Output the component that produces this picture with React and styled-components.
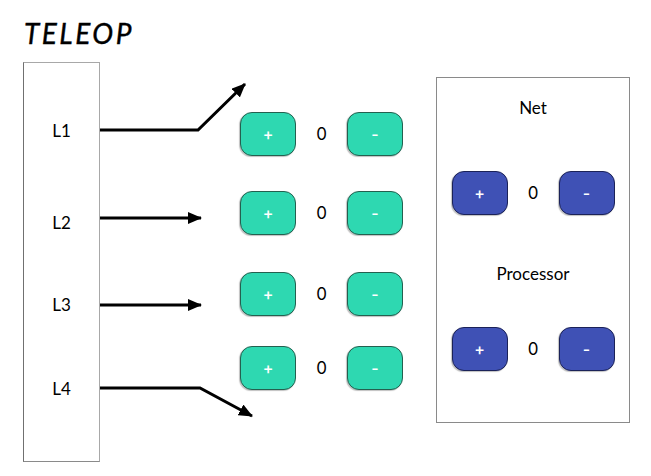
import React from "react";
import styled, { createGlobalStyle } from "styled-components";

const GlobalStyle = createGlobalStyle`
  html, body {
    margin: 0;
    padding: 0;
    background: #ffffff;
  }
  body {
    font-family: Lato, "Noto Sans", sans-serif;
    color: #000;
  }
`;

const Page = styled.div`
  width: 651px;
  height: 476px;
  box-sizing: border-box;
  padding: 17px 0 0 24px;
`;

const Title = styled.h1`
  margin: 0;
  height: 33px;
  font-family: Lato, sans-serif;
  font-style: italic;
  font-weight: 400;
  font-size: 28px;
  line-height: 33px;
  letter-spacing: 2.5px;
  -webkit-text-stroke: 0.4px #000;
`;

const Main = styled.div`
  display: flex;
  align-items: flex-start;
  margin-top: 12px;
  margin-left: -1px;
`;

const LaneBox = styled.div`
  box-sizing: border-box;
  width: 77px;
  height: 400px;
  border: 1px solid #a8a8a8;
  border-left-color: #707070;
  border-bottom-color: #8a8a8a;
  display: flex;
  flex-direction: column;
  align-items: center;
  padding-top: 58px;
`;

const Lane = styled.div`
  height: 20px;
  line-height: 20px;
  font-size: 17px;
  margin-top: ${({ $gap }) => $gap || 0}px;
`;

const Arrows = styled.svg`
  display: block;
  flex: none;
  overflow: visible;
`;

const ButtonColumn = styled.div`
  display: flex;
  flex-direction: column;
`;

const CounterRow = styled.div`
  display: flex;
  align-items: center;
  margin-top: ${({ $gap }) => $gap || 0}px;
`;

const StepButton = styled.button`
  box-sizing: border-box;
  width: 56px;
  height: 44px;
  padding: 0;
  border-radius: 12px;
  border: 1px solid ${({ $tone }) => ($tone === "blue" ? "#1b2258" : "#24604f")};
  background: ${({ $tone }) => ($tone === "blue" ? "#3f51b5" : "#2ed8b1")};
  box-shadow: -1px 1px 1px rgba(0, 0, 0, 0.25);
  color: #fff;
  font-family: Inter, "Noto Sans", sans-serif;
  font-size: 16px;
  font-weight: 500;
  cursor: pointer;
`;

const Count = styled.span`
  width: 51px;
  text-align: center;
  font-family: Inter, "Noto Sans", sans-serif;
  font-size: 17px;
`;

const Panel = styled.div`
  box-sizing: border-box;
  width: 194px;
  height: 346px;
  margin-top: 15px;
  margin-left: 33px;
  border: 1px solid #8a8a8a;
  display: flex;
  flex-direction: column;
  align-items: center;
`;

const PanelTitle = styled.div`
  height: 20px;
  line-height: 20px;
  font-size: 17px;
  margin-top: ${({ $gap }) => $gap}px;
`;

function Counter({ tone, gap }) {
  return (
    <CounterRow $gap={gap}>
      <StepButton $tone={tone}>+</StepButton>
      <Count>0</Count>
      <StepButton $tone={tone}>-</StepButton>
    </CounterRow>
  );
}

function LaneArrows() {
  return (
    <Arrows width="140" height="400" viewBox="0 0 140 400">
      <defs>
        <marker
          id="head"
          markerUnits="userSpaceOnUse"
          markerWidth="14"
          markerHeight="12"
          refX="13"
          refY="6"
          orient="auto"
        >
          <path d="M0,0 L14,6 L0,12 Z" fill="#000" />
        </marker>
      </defs>
      <g fill="none" stroke="#000" strokeWidth="3">
        <polyline points="0,68 98,68 145,22" markerEnd="url(#head)" />
        <polyline points="0,156 101,156" markerEnd="url(#head)" />
        <polyline points="0,243 101,243" markerEnd="url(#head)" />
        <polyline points="0,326 100,326 152,354" markerEnd="url(#head)" />
      </g>
    </Arrows>
  );
}

export default function App() {
  return (
    <>
      <GlobalStyle />
      <Page>
        <Title>TELEOP</Title>
        <Main>
          <LaneBox>
            <Lane>L1</Lane>
            <Lane $gap={72}>L2</Lane>
            <Lane $gap={62}>L3</Lane>
            <Lane $gap={64}>L4</Lane>
          </LaneBox>
          <LaneArrows />
          <ButtonColumn>
            <Counter tone="green" gap={50} />
            <Counter tone="green" gap={35} />
            <Counter tone="green" gap={37} />
            <Counter tone="green" gap={30} />
          </ButtonColumn>
          <Panel>
            <PanelTitle $gap={20}>Net</PanelTitle>
            <Counter tone="blue" gap={53} />
            <PanelTitle $gap={49}>Processor</PanelTitle>
            <Counter tone="blue" gap={43} />
          </Panel>
        </Main>
      </Page>
    </>
  );
}
